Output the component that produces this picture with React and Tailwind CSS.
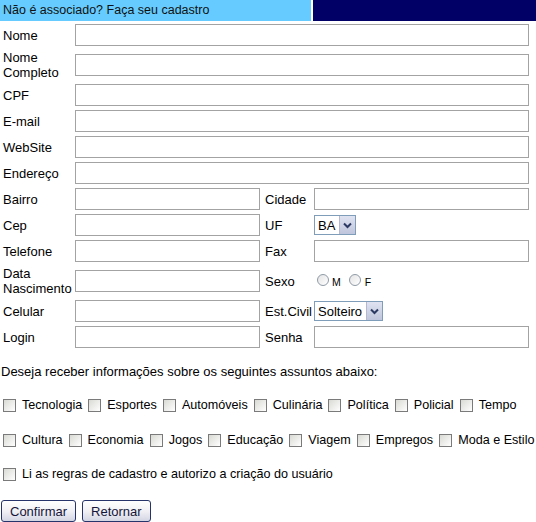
import React from 'react';

const FONT = "font-['Liberation_Sans',Arial,sans-serif]";

const Field = ({ className = '' }) => (
  <input type="text" className={`block h-[22px] w-full border border-[#a3a3a3] bg-white outline-none ${className}`} />
);

const Label = ({ children, right }) => (
  <div className={`text-[13px] leading-[15px] text-black ${right ? 'pl-[5px]' : 'pl-[3px]'}`}>{children}</div>
);

const Chevron = () => (
  <span className="flex h-full w-[16px] items-center justify-center border-l border-[#b4b9cf] bg-gradient-to-b from-[#dfe3f1] to-[#bfc5dc]">
    <svg width="9" height="7" viewBox="0 0 9 7">
      <path d="M1 1.5 L4.5 5 L8 1.5" fill="none" stroke="#2c3a63" strokeWidth="2" />
    </svg>
  </span>
);

const Select = ({ value, width }) => (
  <div className={`flex h-[20px] items-center border border-[#7f9db9] bg-white ${width}`}>
    <span className="flex-1 pl-[3px] text-[13px] leading-[15px] text-black">{value}</span>
    <Chevron />
  </div>
);

const Radio = () => (
  <span className="inline-block h-[12px] w-[12px] rounded-full border border-[#8f9aa6] bg-gradient-to-br from-[#e4e4e4] to-white" />
);

const Box = ({ first }) => (
  <span className={`inline-block h-[13px] w-[13px] shrink-0 border border-[#7a7a7a] bg-gradient-to-br from-[#d9d9d4] to-white ${first ? 'ml-[3px]' : 'ml-[6px]'}`} />
);

const CheckRow = ({ items, className = '' }) => (
  <div className={`flex h-[15px] items-center whitespace-nowrap text-[12.6px] leading-[15px] text-black ${className}`}>
    {items.map((t, i) => (
      <React.Fragment key={t}>
        <Box first={i === 0} />
        <span className="ml-[6px]">{t}</span>
      </React.Fragment>
    ))}
  </div>
);

const Row = ({ children, tall }) => (
  <div className={`grid grid-cols-[75px_185px_54px_215px] items-center ${tall ? 'h-[32px]' : 'h-[24px]'}`}>{children}</div>
);

const FullRow = ({ label, tall }) => (
  <Row tall={tall}>
    <Label>{label}</Label>
    <div className="col-span-3">
      <Field />
    </div>
  </Row>
);

const HalfRow = ({ left, right, tall, rightContent }) => (
  <Row tall={tall}>
    <Label>{left}</Label>
    <Field />
    <Label right>{right}</Label>
    {rightContent || <Field />}
  </Row>
);

const Button = ({ children, className = '' }) => (
  <button className={`h-[22px] rounded-[3px] border border-[#26346b] bg-gradient-to-b from-white via-[#f1f1f5] to-[#d3d5e3] px-[8px] text-[13px] leading-[15px] text-[#15153a] ${className}`}>
    {children}
  </button>
);

export default function App() {
  return (
    <div className={`w-[536px] h-[522px] overflow-hidden bg-white ${FONT}`}>
      <div className="flex flex-col gap-[2px]">
        <div className="flex h-[21px]">
          <div className="flex w-[311px] items-center bg-[#66ccff] pl-[3px] text-[12.5px] leading-[15px] text-[#111]">
            Não é associado? Faça seu cadastro
          </div>
          <div className="ml-[2px] flex-1 bg-[#000066]" />
        </div>
        <FullRow label="Nome" />
        <FullRow label={<>Nome<br />Completo</>} tall />
        <FullRow label="CPF" />
        <FullRow label="E-mail" />
        <FullRow label="WebSite" />
        <FullRow label="Endereço" />
        <HalfRow left="Bairro" right="Cidade" />
        <HalfRow left="Cep" right="UF" rightContent={<Select value="BA" width="w-[42px]" />} />
        <HalfRow left="Telefone" right="Fax" />
        <HalfRow
          left={<>Data<br />Nascimento</>}
          right="Sexo"
          tall
          rightContent={
            <div className="flex items-center text-[10.5px] leading-[12px] text-black">
              <span className="ml-[3px]"><Radio /></span>
              <span className="ml-[3px] mt-[2px]">M</span>
              <span className="ml-[8px]"><Radio /></span>
              <span className="ml-[4px] mt-[2px]">F</span>
            </div>
          }
        />
        <HalfRow left="Celular" right="Est.Civil" rightContent={<Select value="Solteiro" width="w-[69px]" />} />
        <HalfRow left="Login" right="Senha" />
      </div>

      <p className="mt-[15px] pl-[1px] text-[13px] leading-[15px] text-black">
        Deseja receber informações sobre os seguintes assuntos abaixo:
      </p>
      <CheckRow className="mt-[19px]" items={['Tecnologia', 'Esportes', 'Automóveis', 'Culinária', 'Política', 'Policial', 'Tempo']} />
      <CheckRow className="mt-[20px]" items={['Cultura', 'Economia', 'Jogos', 'Educação', 'Viagem', 'Empregos', 'Moda e Estilo']} />
      <CheckRow className="mt-[19px]" items={['Li as regras de cadastro e autorizo a criação do usuário']} />

      <div className="mt-[18px] flex gap-[6px] pl-[1px]">
        <Button>Confirmar</Button>
        <Button>Retornar</Button>
      </div>
    </div>
  );
}
